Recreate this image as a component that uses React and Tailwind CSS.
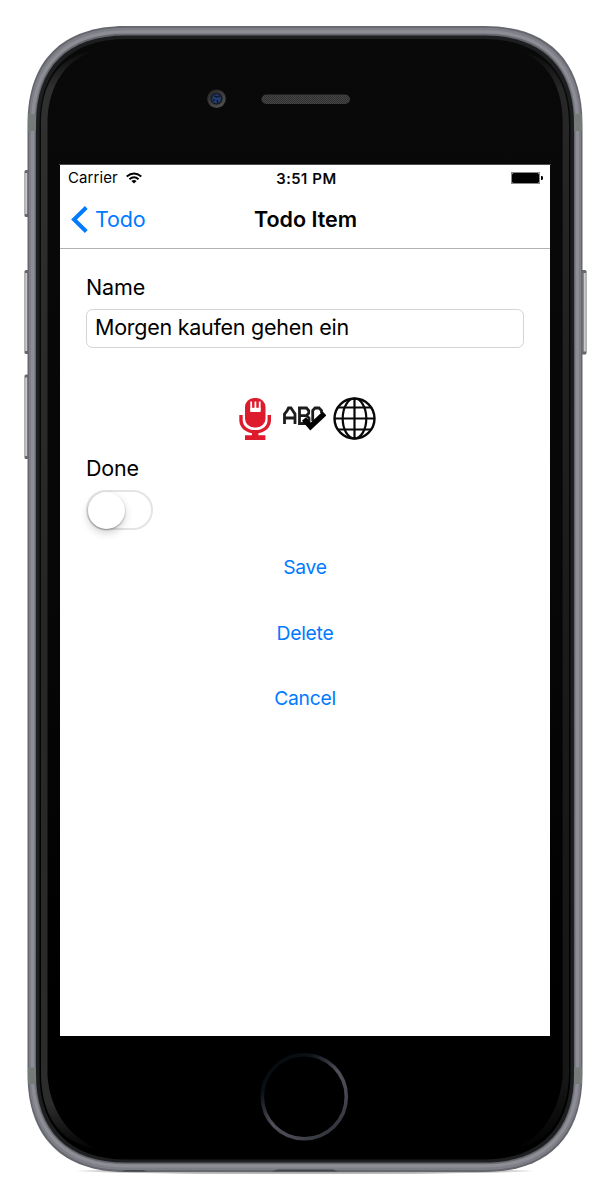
const BODY =
  'M27.5 124C27.5 60.5 62.5 26 125.5 26H484.5C547.5 26 582.5 60.5 582.5 124V1074C582.5 1137.5 547.5 1172 484.5 1172H125.5C62.5 1172 27.5 1137.5 27.5 1074Z';
const GLASS =
  'M36 124C36 67 68 35.5 125.5 35.5H484.5C542 35.5 574 67 574 124V1074C574 1131 542 1162.5 484.5 1162.5H125.5C68 1162.5 36 1131 36 1074Z';
const FACE =
  'M39.5 124C39.5 70 71 39 125.5 39H484.5C539 39 570.5 70 570.5 124V1074C570.5 1128 539 1159.5 484.5 1159.5H125.5C71 1159.5 39.5 1128 39.5 1074Z';

function SideButton({ x, y, h, flip }) {
  return (
    <g>
      <rect x={x} y={y} width="6" height={h} rx="1.5" fill="#66676d" />
      <rect x={flip ? x + 3.3 : x + 0.7} y={y + 3} width="2" height={h - 6} fill="#cbcccd" />
      <rect x={flip ? x + 2 : x + 2.7} y={y + 3} width="1.3" height={h - 6} fill="#8b8c92" />
    </g>
  );
}

function PhoneChassis() {
  return (
    <svg className="absolute inset-0" width="605" height="1200" viewBox="0 0 605 1200" aria-hidden="true">
      <defs>
        <linearGradient id="face" x1="0" x2="0" y1="0" y2="1">
          <stop offset="0" stopColor="#090909" />
          <stop offset="0.55" stopColor="#060606" />
          <stop offset="0.85" stopColor="#000" />
        </linearGradient>
        <linearGradient id="gleamL" x1="0" x2="0" y1="50" y2="1148" gradientUnits="userSpaceOnUse">
          <stop offset="0" stopColor="#0a0a0a" />
          <stop offset="0.035" stopColor="#303030" />
          <stop offset="0.5" stopColor="#262626" />
          <stop offset="0.96" stopColor="#2c2c2c" />
          <stop offset="1" stopColor="#040404" />
        </linearGradient>
        <linearGradient id="gleamR" x1="0" x2="0" y1="50" y2="1148" gradientUnits="userSpaceOnUse">
          <stop offset="0" stopColor="#0a0a0a" />
          <stop offset="0.035" stopColor="#272727" />
          <stop offset="0.5" stopColor="#1b1b1b" />
          <stop offset="0.94" stopColor="#161616" />
          <stop offset="1" stopColor="#020202" />
        </linearGradient>
        <linearGradient id="home" x1="270" y1="1060" x2="335" y2="1140" gradientUnits="userSpaceOnUse">
          <stop offset="0" stopColor="#03080c" />
          <stop offset="0.2" stopColor="#0c1116" />
          <stop offset="0.5" stopColor="#50505a" />
          <stop offset="0.75" stopColor="#44454e" />
          <stop offset="1" stopColor="#2b2d35" />
        </linearGradient>
        <radialGradient id="shadow">
          <stop offset="0" stopColor="#000" stopOpacity="0.4" />
          <stop offset="0.85" stopColor="#000" stopOpacity="0.25" />
          <stop offset="1" stopColor="#000" stopOpacity="0" />
        </radialGradient>
        <linearGradient id="lens" x1="0" x2="0.7" y1="0" y2="1">
          <stop offset="0" stopColor="#222" />
          <stop offset="1" stopColor="#505050" />
        </linearGradient>
        <pattern id="mesh" width="2" height="2" patternUnits="userSpaceOnUse">
          <rect width="2" height="2" fill="#444" />
          <rect width="1" height="1" fill="#2d2d2d" />
          <rect x="1" y="1" width="1" height="1" fill="#333" />
        </pattern>
      </defs>
      <ellipse cx="305" cy="1171" rx="232" ry="3.5" fill="url(#shadow)" />
      <SideButton x={24.5} y={170} h={47} />
      <SideButton x={24.5} y={270} h={84} />
      <SideButton x={24.5} y={374.5} h={84.5} />
      <SideButton x={580.5} y={270} h={84.5} flip />
      <path d={BODY} fill="#66676e" />
      <path
        d="M32 124C32 64 66 30.8 125.5 30.8H484.5C544 30.8 578 64 578 124V1074C578 1134 544 1167 484.5 1167H125.5C66 1167 32 1134 32 1074Z"
        fill="none"
        stroke="#7e7f86"
        strokeWidth="6"
      />
      <path
        d="M32.500 124C32.500 65 66.500 31.800 125.500 31.800H484.500C543.500 31.800 577.500 65 577.500 124V1074C577.500 1133 543.500 1166 484.500 1166H125.500C66.500 1166 32.500 1133 32.500 1074Z"
        fill="none"
        stroke="#8d8e95"
        strokeWidth="3"
      />
      <path d="M28 114h8v17h-8zM574 114h8v17h-8zM28 1067.500h8v16.500h-8zM574 1067.500h8v16.500h-8z" fill="#747b78" />
      <path d="M122 1171.500l3-1.500h18l4 1.500zM272 1171.500l5-2h56l5 2z" fill="#45484b" />
      <path d={GLASS} fill="#1d1e1f" />
      <path d={FACE} fill="url(#face)" />
      <path
        d="M41 125C41 82 59 55 97 50C66 59 49 84 47.500 120V1076C50 1108 66 1135 97 1149C58 1143 41 1114 41 1072Z"
        fill="url(#gleamL)"
      />
      <path
        d="M569 125C569 82 551 55 516 50C546 59 562 84 562.700 120V1076C560 1108 544 1137 514 1149C551 1143 569 1114 569 1072Z"
        fill="url(#gleamR)"
      />
      <rect x="59" y="164" width="492" height="1" fill="#4b4b4b" />
      <circle cx="216.500" cy="98.700" r="9.300" fill="url(#lens)" />
      <circle cx="216.500" cy="98.700" r="6" fill="#171a22" />
      <circle cx="216.500" cy="98.700" r="4.500" fill="#233d73" />
      <path d="M214 96l3 1 3-1M217 100l1 3M213 100h2" stroke="#10182c" strokeWidth="1.500" fill="none" />
      <rect x="261.500" y="94.500" width="88.500" height="9.500" rx="4.750" fill="url(#mesh)" />
      <circle cx="304.300" cy="1096.700" r="42" fill="none" stroke="url(#home)" strokeWidth="3.600" />
    </svg>
  );
}

function StatusBar() {
  return (
    <div className="flex h-[27px] items-center justify-between pr-[7px] pl-2 text-[15px]">
      <div className="flex w-[120px] items-center gap-[7px]">
        <span className="w-[51px] tracking-[0.1px]">Carrier</span>
        <svg className="-mt-[2px]" width="16" height="12" viewBox="0 0 16 12" fill="none" stroke="#000" strokeWidth="1.9">
          <path d="M.7 4.500Q8-1.500 15.300 4.500M3.400 7.300Q8 3.400 12.600 7.300" />
          <path d="M5.400 8.900Q8 7.300 10.600 8.900L8 11.600Z" fill="#000" stroke="none" />
        </svg>
      </div>
      <span className="w-[64px] pt-px pl-[2px] text-center font-medium tracking-[0.5px] whitespace-nowrap [-webkit-text-stroke:0.2px_#000]">
        3:51 PM
      </span>
      <div className="-mt-[2px] flex w-[120px] justify-end">
        <svg width="32" height="12" viewBox="0 0 32 12">
          <rect x=".5" y=".5" width="28" height="11" fill="#fff" stroke="#888" />
          <rect x="1" y="1" width="27" height="10" rx="1.500" fill="#000" />
          <path d="M30 4h1.200l.8 1v2l-.8 1H30z" fill="#000" />
        </svg>
      </div>
    </div>
  );
}

function NavBar() {
  return (
    <nav className="grid h-[57px] grid-cols-[1fr_auto_1fr] items-center border-b border-[#b2b2b2] pb-[2px] pl-[11px] text-[21.5px]">
      <button className="flex w-0 items-center gap-[7px] text-[#007aff]">
        <svg className="shrink-0" width="17" height="27" viewBox="0 0 17 27" fill="none" stroke="#007aff" strokeWidth="4">
          <path d="M15.300 1.500L3 13.500L15.300 25.500" />
        </svg>
        <span className="tracking-[-0.2px]">Todo</span>
      </button>
      <h1 className="-ml-[10px] font-semibold">Todo Item</h1>
      <span />
    </nav>
  );
}

function MicIcon() {
  return (
    <svg width="32" height="42" viewBox="0 0 32 42">
      <rect x="6" y="0" width="20.500" height="29.500" rx="9" fill="#dd1b2c" />
      <path d="M12.200 3.500v9M16.400 3.500v9M20.700 3.500v9" fill="none" stroke="#fff" strokeWidth="1.800" />
      <path d="M11.300 9.800h10.300v4.200h-10.300z" fill="#fff" />
      <path d="M2 17v5c0 7 6 11.800 14.200 11.800S30.300 29 30.300 22v-5" fill="none" stroke="#dd1b2c" strokeWidth="3.400" />
      <path d="M13 33h6.400v4.300h7V42H6v-4.700h7z" fill="#dd1b2c" />
    </svg>
  );
}

function SpellCheckIcon() {
  return (
    <svg width="43" height="26" viewBox="0 0 43 26" fill="none" stroke="#1c1c1c" strokeWidth="2.800">
      <path d="M1.500 19V9L4 6L5.500 3H8L10 6L12 9V19M2 13h10" />
      <path d="M16.500 2.500v16h9M15 3h8.500l2.200 2.500v2.700l-2.200 2.500h-7M24 11l2 2v4" />
      <path d="M38.500 8V5.500L36 3H32L29.700 5.500V16" />
      <path d="M21 14L27.500 21.500L41.500 8.500" stroke="#000" strokeWidth="5.400" />
    </svg>
  );
}

function GlobeIcon() {
  return (
    <svg width="43" height="43" viewBox="0 0 43 43" fill="none" stroke="#080808" strokeWidth="2.200">
      <circle cx="21.500" cy="21.500" r="20" strokeWidth="2.400" />
      <ellipse cx="21.500" cy="21.500" rx="11.800" ry="20" />
      <path d="M21.500 1v41M1 21.500h41M5 10.500h33M5 32.500h33" />
    </svg>
  );
}

function Screen() {
  return (
    <main className="flex h-[871px] w-[490px] flex-col bg-white">
      <StatusBar />
      <NavBar />
      <section className="flex flex-col px-[26px] pt-[24px] text-[21.5px] leading-[28px]">
        <label htmlFor="name" className="tracking-[-0.1px]">Name</label>
        <input
          id="name"
          className="mt-[8px] h-[39px] rounded-[6.500px] border border-[#d4d4d4] pr-[9px] pb-[3px] pl-[8px] tracking-[-0.26px] outline-none"
          defaultValue="Morgen kaufen gehen ein"
        />
        <div className="mt-[49px] flex h-[43px] items-center justify-center gap-[7px] pl-[4px]">
          <button className="mr-[5px]"><MicIcon /></button>
          <button className="-mt-[2px]"><SpellCheckIcon /></button>
          <button><GlobeIcon /></button>
        </div>
        <span className="mt-[14px] tracking-[-0.2px]">Done</span>
        <button
          role="switch"
          aria-checked="false"
          aria-label="Done"
          className="mt-[8px] h-[40px] w-[67px] rounded-full border-2 border-[#e4e4e4] bg-white"
        >
          <span className="block size-[37px] rounded-full bg-white shadow-[0_4px_9px_rgba(0,0,0,0.18),0_1px_2px_rgba(0,0,0,0.3)]" />
        </button>
        <div className="mt-[23px] flex flex-col items-center gap-[37.500px] text-[19.300px] tracking-[-0.25px] text-[#007aff]">
          <button>Save</button>
          <button>Delete</button>
          <button>Cancel</button>
        </div>
      </section>
    </main>
  );
}

export default function App() {
  return (
    <div className="relative h-[1200px] w-[605px] overflow-hidden bg-white font-[Inter,sans-serif] text-black">
      <PhoneChassis />
      <div className="relative pt-[165px] pl-[60px]">
        <Screen />
      </div>
    </div>
  );
}
